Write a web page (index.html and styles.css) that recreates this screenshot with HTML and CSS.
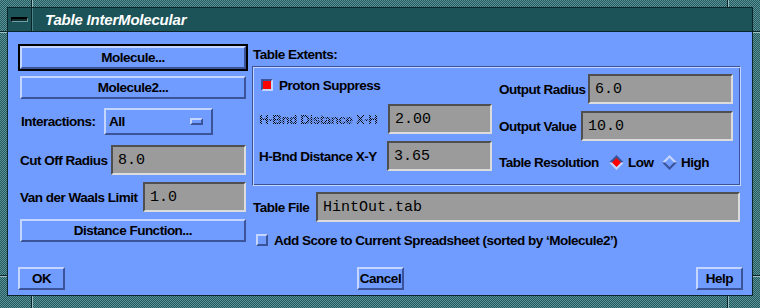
FILE: index.html
```html
<!DOCTYPE html>
<html lang="en">
<head>
    <meta charset="UTF-8">
    <title>Table InterMolecular</title>
    <link rel="stylesheet" href="styles.css">
</head>
<body>
    <div class="window">
        <div class="frame-inner">
            <div class="titlebar">
                <div class="menu-btn"><span class="menu-bar"></span></div>
                <div class="title">Table InterMolecular</div>
            </div>
            <div class="content">
                <div class="main">
                    <div class="left">
                        <div class="default-ring"><div class="btn">Molecule...</div></div>
                        <div class="btn mol2">Molecule2...</div>
                        <div class="row interactions">
                            <span class="label">Interactions:</span>
                            <div class="option"><span>All</span><span class="indicator"></span></div>
                        </div>
                        <div class="row field-row cutoff">
                            <span class="label">Cut Off Radius</span>
                            <div class="field w135">8.0</div>
                        </div>
                        <div class="row field-row vdw">
                            <span class="label">Van der Waals Limit</span>
                            <div class="field w103">1.0</div>
                        </div>
                        <div class="btn distfn">Distance Function...</div>
                    </div>
                    <div class="right">
                        <div class="extents-label">Table Extents:</div>
                        <div class="extents">
                            <div class="ext-col ext-left">
                                <div class="check-row">
                                    <span class="check on"></span>
                                    <span class="label">Proton Suppress</span>
                                </div>
                                <div class="row field-row xh">
                                    <span class="label disabled">H-Bnd Distance X-H</span>
                                    <div class="field w104">2.00</div>
                                </div>
                                <div class="row field-row xy">
                                    <span class="label">H-Bnd Distance X-Y</span>
                                    <div class="field w105">3.65</div>
                                </div>
                            </div>
                            <div class="ext-col ext-right">
                                <div class="row field-row oradius">
                                    <span class="label">Output Radius</span>
                                    <div class="field w145">6.0</div>
                                </div>
                                <div class="row field-row ovalue">
                                    <span class="label">Output Value</span>
                                    <div class="field w152">10.0</div>
                                </div>
                                <div class="row resolution">
                                    <span class="label res-label">Table Resolution</span>
                                    <span class="radio low">
                                        <svg width="15" height="15" viewBox="0 0 15 15">
                                            <polygon points="0,7.5 7.5,0 15,7.5" fill="#3b5499"/>
                                            <polygon points="0,7.5 7.5,15 15,7.5" fill="#c4d6ff"/>
                                            <polygon points="3,7.5 7.5,3 12,7.5 7.5,12" fill="#ff0000"/>
                                        </svg>
                                        <span class="label">Low</span>
                                    </span>
                                    <span class="radio">
                                        <svg width="15" height="15" viewBox="0 0 15 15">
                                            <polygon points="0,7.5 7.5,0 15,7.5" fill="#c4d6ff"/>
                                            <polygon points="0,7.5 7.5,15 15,7.5" fill="#3b5499"/>
                                            <polygon points="3,7.5 7.5,3 12,7.5 7.5,12" fill="#709bff"/>
                                        </svg>
                                        <span class="label">High</span>
                                    </span>
                                </div>
                            </div>
                        </div>
                        <div class="row field-row tablefile">
                            <span class="label">Table File</span>
                            <div class="field w424">HintOut.tab</div>
                        </div>
                        <div class="check-row addscore">
                            <span class="check"></span>
                            <span class="label">Add Score to Current Spreadsheet (sorted by ‘Molecule2’)</span>
                        </div>
                    </div>
                </div>
                <div class="actions">
                    <div class="btn small">OK</div>
                    <div class="btn small">Cancel</div>
                    <div class="btn small">Help</div>
                </div>
            </div>
        </div>
    </div>
</body>
</html>
```

FILE: styles.css
```css
:root {
    --bg: #709bff;
    --light: #c4d6ff;
    --dark: #3b5499;
    --field: #9b9b9b;
    --teal: #1b5358;
    --teal-dark: #0a2427;
    --notch: #9cc0c3;
}
* { box-sizing: border-box; }
body {
    margin: 0;
    font-family: "Liberation Sans", Arial, sans-serif;
    font-weight: bold;
    font-size: 13.5px;
    letter-spacing: -0.5px;
    color: #000;
}
/* window frame, with the resize-corner notches drawn as thin lines */
.window {
    width: 760px;
    height: 308px;
    padding: 7px 7px 12px 7px;
    background:
        linear-gradient(var(--teal-dark), var(--teal-dark)) 31px 0 / 1px 7px no-repeat,
        linear-gradient(var(--notch), var(--notch)) 32px 0 / 1px 7px no-repeat,
        linear-gradient(var(--teal-dark), var(--teal-dark)) 727px 0 / 1px 7px no-repeat,
        linear-gradient(var(--notch), var(--notch)) 728px 0 / 1px 7px no-repeat,
        linear-gradient(var(--teal-dark), var(--teal-dark)) 31px 296px / 1px 12px no-repeat,
        linear-gradient(var(--notch), var(--notch)) 32px 296px / 1px 12px no-repeat,
        linear-gradient(var(--teal-dark), var(--teal-dark)) 727px 296px / 1px 12px no-repeat,
        linear-gradient(var(--notch), var(--notch)) 728px 296px / 1px 12px no-repeat,
        linear-gradient(var(--teal-dark), var(--teal-dark)) 0 31px / 7px 1px no-repeat,
        linear-gradient(var(--notch), var(--notch)) 0 32px / 7px 1px no-repeat,
        linear-gradient(var(--teal-dark), var(--teal-dark)) 0 275px / 7px 1px no-repeat,
        linear-gradient(var(--notch), var(--notch)) 0 276px / 7px 1px no-repeat,
        linear-gradient(var(--teal-dark), var(--teal-dark)) 753px 31px / 7px 1px no-repeat,
        linear-gradient(var(--notch), var(--notch)) 753px 32px / 7px 1px no-repeat,
        linear-gradient(var(--teal-dark), var(--teal-dark)) 753px 275px / 7px 1px no-repeat,
        linear-gradient(var(--notch), var(--notch)) 753px 276px / 7px 1px no-repeat,
        repeating-conic-gradient(#1f5a60 0 25%, #5f9296 0 50%) 0 0 / 2px 2px;
    display: flex;
}
.frame-inner {
    flex: 1;
    display: flex;
    flex-direction: column;
    border: 1px solid var(--teal-dark);
}
.titlebar {
    height: 24px;
    display: flex;
    background: var(--teal);
    border-bottom: 1px solid var(--teal-dark);
}
.menu-btn {
    width: 24px;
    border-right: 1px solid var(--teal-dark);
    box-shadow: 1px 0 0 #4f8287;
    display: flex;
    align-items: center;
    justify-content: center;
}
.menu-bar {
    width: 17px;
    height: 5px;
    border: 1px solid #000;
    border-top-width: 2px;
    border-right-color: #6f9fa3;
    border-bottom-color: #6f9fa3;
    background: #102f33;
}
.title {
    padding-left: 13px;
    color: #fff;
    font-style: italic;
    font-size: 15px;
    letter-spacing: -0.2px;
    line-height: 23px;
}
.content {
    flex: 1;
    background: var(--bg);
}
.main {
    display: flex;
    gap: 4px;
    padding: 12px 11px 0 10px;
}
.left { width: 230px; }
.right { flex: 1; }

.btn {
    height: 23px;
    border: 2px solid;
    border-color: var(--light) var(--dark) var(--dark) var(--light);
    background: var(--bg);
    display: flex;
    align-items: center;
    justify-content: center;
}
.default-ring { border: 2px solid #000; }
.mol2 { margin: 5px 2px 0; }
.distfn { margin: 7px 2px 0; }

.row { display: flex; align-items: center; }
.field-row { justify-content: space-between; height: 30px; }
.interactions { margin-top: 9px; height: 27px; padding-left: 3px; }
.interactions .label { width: 83px; }
.option {
    width: 109px;
    height: 27px;
    border: 2px solid;
    border-color: var(--light) var(--dark) var(--dark) var(--light);
    display: flex;
    align-items: center;
    justify-content: space-between;
    padding: 0 8px 0 3px;
}
.indicator {
    width: 13px;
    height: 7px;
    border: 2px solid;
    border-color: var(--light) var(--dark) var(--dark) var(--light);
}
.cutoff { margin: 10px 2px 0; }
.vdw { margin: 7px 2px 0; }

.field {
    height: 30px;
    background: var(--field);
    border: 2px solid;
    border-color: #4f4f4f #dcdcdc #dcdcdc #4f4f4f;
    font-family: "Liberation Mono", "Courier New", monospace;
    font-weight: normal;
    font-size: 15px;
    letter-spacing: 0;
    display: flex;
    align-items: center;
    padding-left: 5px;
}
.w103 { width: 103px; }
.w104 { width: 104px; }
.w105 { width: 105px; }
.w135 { width: 135px; }
.w145 { width: 145px; }
.w152 { width: 152px; }
.w424 { width: 424px; }

.extents-label { height: 22px; line-height: 22px; padding-left: 1px; }
.extents {
    height: 120px;
    border: 1px solid;
    border-color: var(--dark) var(--light) var(--light) var(--dark);
    box-shadow: inset 1px 1px 0 var(--light), inset -1px -1px 0 var(--dark);
    display: flex;
}
.ext-left { width: 233px; margin-left: 6px; padding-top: 8px; }
.ext-right { width: 234px; margin-left: 7px; padding-top: 7px; }
.check-row { display: flex; align-items: center; height: 20px; }
.check {
    width: 12px;
    height: 12px;
    margin-left: 2px;
    margin-right: 6px;
    border: 2px solid;
    border-color: var(--light) var(--dark) var(--dark) var(--light);
    background: var(--bg);
}
.check.on {
    border-color: var(--dark) var(--light) var(--light) var(--dark);
    background: #ff0000;
}
.xh { margin-top: 9px; }
.xy { margin-top: 7px; }
/* insensitive label: stippled like the Motif 50% pattern */
.disabled {
    color: transparent;
    background: repeating-conic-gradient(#000 0 25%, transparent 0 50%) 0 0 / 2px 2px;
    -webkit-background-clip: text;
    background-clip: text;
}
.ovalue { margin-top: 7px; }
.resolution { margin-top: 11px; height: 20px; }
.res-label { width: 110px; }
.radio { display: flex; align-items: center; gap: 4px; }
.radio.low { width: 53px; }
.radio svg { display: block; }

.tablefile { margin: 6px 1px 0 1px; }
.addscore { margin-top: 8px; padding-left: 2px; }

.actions {
    display: flex;
    justify-content: space-between;
    margin-top: 17px;
    padding: 0 9px 0 10px;
}
.btn.small { width: 47px; }
```
